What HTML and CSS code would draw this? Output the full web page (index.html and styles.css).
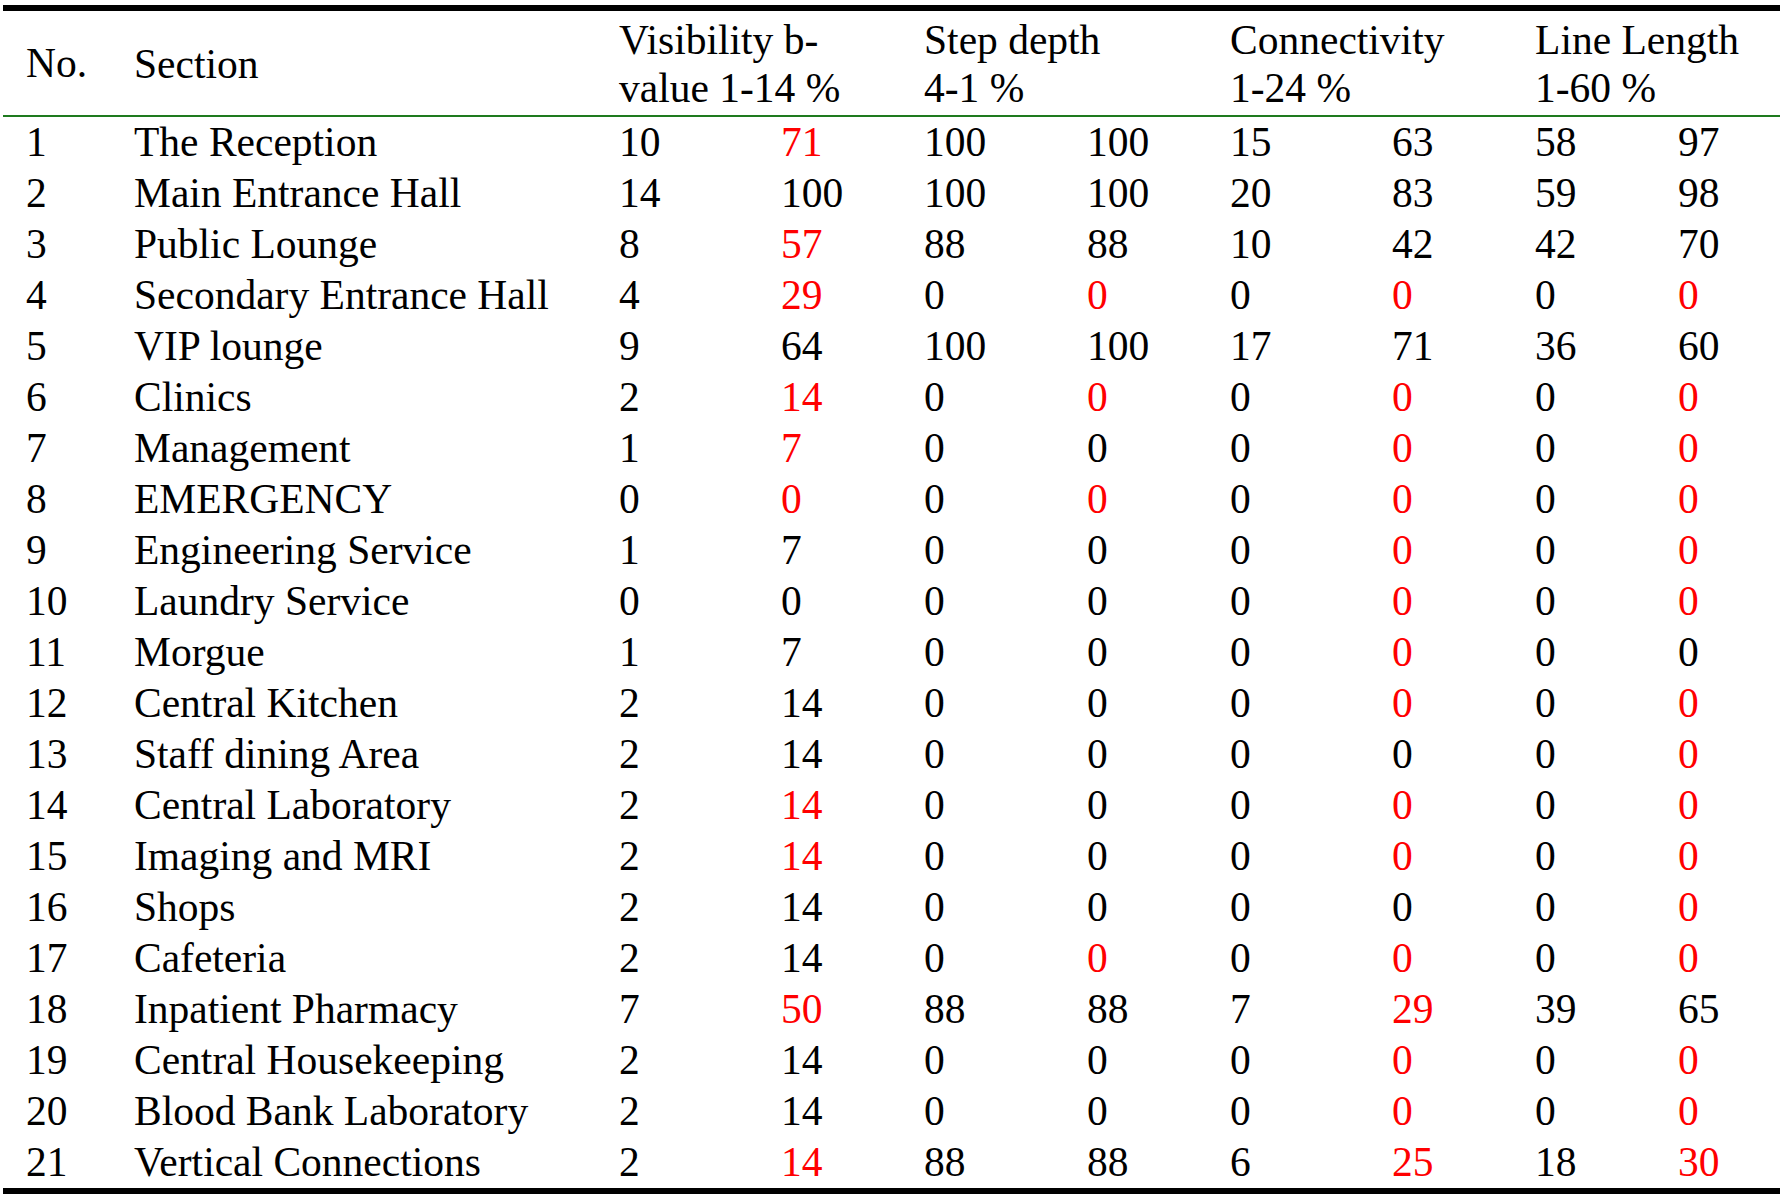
FILE: index.html
```html
<!DOCTYPE html>
<html lang="en">
<head>
<meta charset="utf-8">
<title>Table</title>
<link rel="stylesheet" href="styles.css">
</head>
<body>
<table class="data">
  <colgroup>
    <col class="c-no"><col class="c-sec">
    <col class="c-a"><col class="c-b">
    <col class="c-a2"><col class="c-b">
    <col class="c-a"><col class="c-b">
    <col class="c-b"><col class="c-last">
  </colgroup>
  <thead>
    <tr>
      <th class="first">No.</th>
      <th>Section</th>
      <th colspan="2">Visibility b-<br>value 1-14 %</th>
      <th colspan="2">Step depth<br>4-1 %</th>
      <th colspan="2">Connectivity<br>1-24 %</th>
      <th colspan="2">Line Length<br>1-60 %</th>
    </tr>
  </thead>
  <tbody>
    <tr><td class="first">1</td><td>The Reception</td><td>10</td><td class="r">71</td><td>100</td><td>100</td><td>15</td><td>63</td><td>58</td><td>97</td></tr>
    <tr><td class="first">2</td><td>Main Entrance Hall</td><td>14</td><td>100</td><td>100</td><td>100</td><td>20</td><td>83</td><td>59</td><td>98</td></tr>
    <tr><td class="first">3</td><td>Public Lounge</td><td>8</td><td class="r">57</td><td>88</td><td>88</td><td>10</td><td>42</td><td>42</td><td>70</td></tr>
    <tr><td class="first">4</td><td>Secondary Entrance Hall</td><td>4</td><td class="r">29</td><td>0</td><td class="r">0</td><td>0</td><td class="r">0</td><td>0</td><td class="r">0</td></tr>
    <tr><td class="first">5</td><td>VIP lounge</td><td>9</td><td>64</td><td>100</td><td>100</td><td>17</td><td>71</td><td>36</td><td>60</td></tr>
    <tr><td class="first">6</td><td>Clinics</td><td>2</td><td class="r">14</td><td>0</td><td class="r">0</td><td>0</td><td class="r">0</td><td>0</td><td class="r">0</td></tr>
    <tr><td class="first">7</td><td>Management</td><td>1</td><td class="r">7</td><td>0</td><td>0</td><td>0</td><td class="r">0</td><td>0</td><td class="r">0</td></tr>
    <tr><td class="first">8</td><td>EMERGENCY</td><td>0</td><td class="r">0</td><td>0</td><td class="r">0</td><td>0</td><td class="r">0</td><td>0</td><td class="r">0</td></tr>
    <tr><td class="first">9</td><td>Engineering Service</td><td>1</td><td>7</td><td>0</td><td>0</td><td>0</td><td class="r">0</td><td>0</td><td class="r">0</td></tr>
    <tr><td class="first">10</td><td>Laundry Service</td><td>0</td><td>0</td><td>0</td><td>0</td><td>0</td><td class="r">0</td><td>0</td><td class="r">0</td></tr>
    <tr><td class="first">11</td><td>Morgue</td><td>1</td><td>7</td><td>0</td><td>0</td><td>0</td><td class="r">0</td><td>0</td><td>0</td></tr>
    <tr><td class="first">12</td><td>Central Kitchen</td><td>2</td><td>14</td><td>0</td><td>0</td><td>0</td><td class="r">0</td><td>0</td><td class="r">0</td></tr>
    <tr><td class="first">13</td><td>Staff dining Area</td><td>2</td><td>14</td><td>0</td><td>0</td><td>0</td><td>0</td><td>0</td><td class="r">0</td></tr>
    <tr><td class="first">14</td><td>Central Laboratory</td><td>2</td><td class="r">14</td><td>0</td><td>0</td><td>0</td><td class="r">0</td><td>0</td><td class="r">0</td></tr>
    <tr><td class="first">15</td><td>Imaging and MRI</td><td>2</td><td class="r">14</td><td>0</td><td>0</td><td>0</td><td class="r">0</td><td>0</td><td class="r">0</td></tr>
    <tr><td class="first">16</td><td>Shops</td><td>2</td><td>14</td><td>0</td><td>0</td><td>0</td><td>0</td><td>0</td><td class="r">0</td></tr>
    <tr><td class="first">17</td><td>Cafeteria</td><td>2</td><td>14</td><td>0</td><td class="r">0</td><td>0</td><td class="r">0</td><td>0</td><td class="r">0</td></tr>
    <tr><td class="first">18</td><td>Inpatient Pharmacy</td><td>7</td><td class="r">50</td><td>88</td><td>88</td><td>7</td><td class="r">29</td><td>39</td><td>65</td></tr>
    <tr><td class="first">19</td><td>Central Housekeeping</td><td>2</td><td>14</td><td>0</td><td>0</td><td>0</td><td class="r">0</td><td>0</td><td class="r">0</td></tr>
    <tr><td class="first">20</td><td>Blood Bank Laboratory</td><td>2</td><td>14</td><td>0</td><td>0</td><td>0</td><td class="r">0</td><td>0</td><td class="r">0</td></tr>
    <tr><td class="first">21</td><td>Vertical Connections</td><td>2</td><td class="r">14</td><td>88</td><td>88</td><td>6</td><td class="r">25</td><td>18</td><td class="r">30</td></tr>
  </tbody>
</table>
</body>
</html>
```

FILE: styles.css
```css
html, body {
  margin: 0;
  padding: 0;
  background: #ffffff;
}

.data {
  margin: 5px 0 0 3px;
  width: 1777px;
  table-layout: fixed;
  border-collapse: separate;
  border-spacing: 0;
  border-top: 6px solid #000000;
  border-bottom: 6px solid #000000;
  font-family: "Liberation Serif", "Times New Roman", serif;
  font-size: 41.5px;
  color: #000000;
}

.c-no { width: 131px; }
.c-sec { width: 485px; }
.c-a { width: 162px; }
.c-a2 { width: 163px; }
.c-b { width: 143px; }
.c-last { width: 102px; }

.data th {
  font-weight: normal;
  text-align: left;
  vertical-align: middle;
  line-height: 48px;
  padding: 5px 0 3px 0;
  border-bottom: 2px solid #1e7a1e;
  white-space: nowrap;
}

.data td {
  text-align: left;
  vertical-align: top;
  line-height: 51px;
  height: 51px;
  padding: 0;
  white-space: nowrap;
}

.data .first {
  padding-left: 23px;
}

.data th.first {
  padding-bottom: 6px;
}

.data td.r {
  color: #ff0000;
}
```
